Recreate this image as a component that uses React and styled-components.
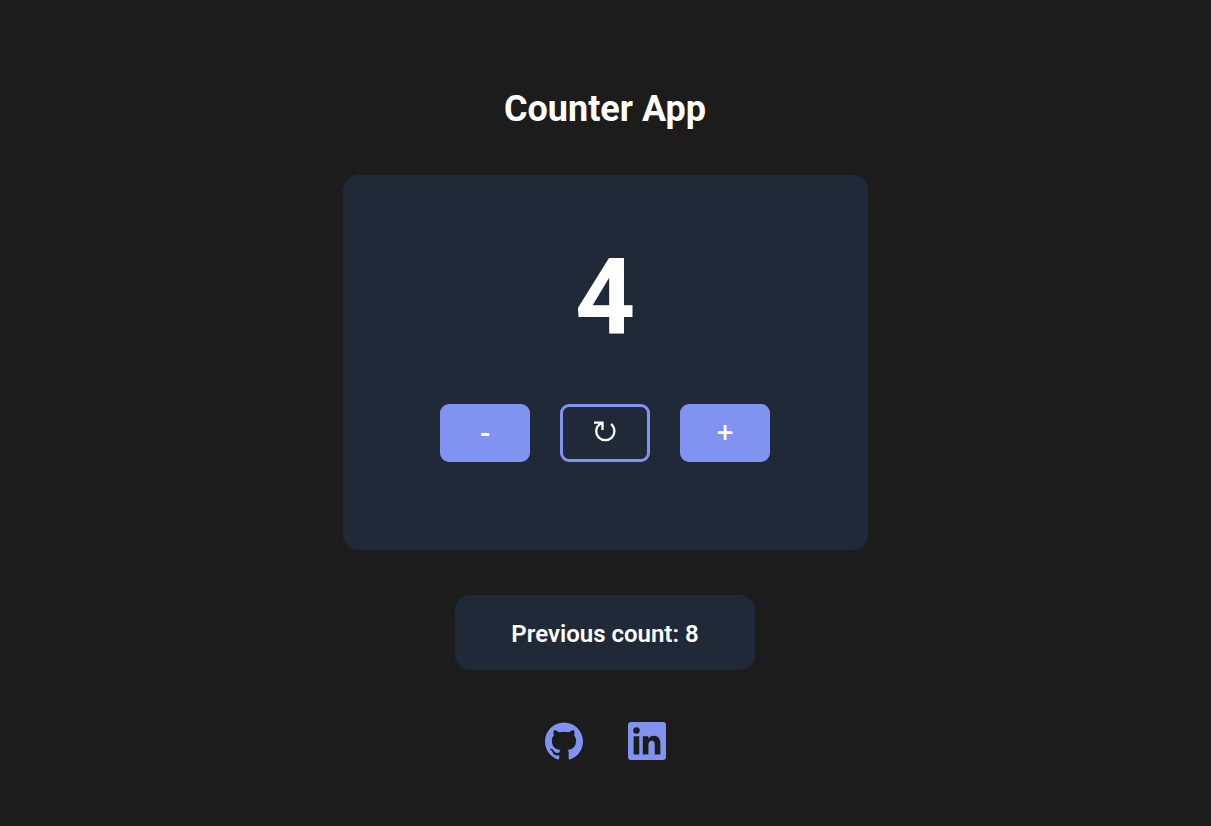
import React, { useState } from "react";
import styled, { createGlobalStyle } from "styled-components";

const GlobalStyle = createGlobalStyle`
  *, *::before, *::after { box-sizing: border-box; }
  body {
    margin: 0;
    background: #1c1c1c;
    color: #fff;
    font-family: Roboto, "Liberation Sans", sans-serif;
  }
`;

const Page = styled.main`
  min-height: 100vh;
  display: flex;
  flex-direction: column;
  align-items: center;
  padding: 88px 17px 64px 16px;
`;

const Title = styled.h1`
  margin: 0 0 45px;
  font-size: 36px;
  line-height: 42px;
  font-weight: 700;
`;

const Card = styled.section`
  width: 100%;
  max-width: 525px;
  padding: 61px 24px 88px;
  border-radius: 15px;
  background: #1f2937;
  display: flex;
  flex-direction: column;
  align-items: center;
`;

const Count = styled.output`
  margin-bottom: 45px;
  font-size: 105px;
  line-height: 123px;
  font-weight: 700;
`;

const Controls = styled.div`
  display: flex;
  gap: 30px;
`;

const ControlButton = styled.button`
  width: 90px;
  height: 58px;
  padding: 0 0 2px;
  display: flex;
  align-items: center;
  justify-content: center;
  border: 3px solid #8193f1;
  border-radius: 9px;
  background: ${({ $outlined }) => ($outlined ? "transparent" : "#8193f1")};
  color: #fff;
  font-family: "Open Sans", "Liberation Sans", sans-serif;
  font-size: 30px;
  line-height: 34px;
  font-weight: 600;
  cursor: pointer;
`;

const Previous = styled.section`
  width: 100%;
  max-width: 300px;
  margin-top: 45px;
  padding: 25px 16px 21px;
  border-radius: 15px;
  background: #1f2937;
  text-align: center;
  font-size: 24px;
  line-height: 29px;
  font-weight: 600;
`;

const Links = styled.nav`
  display: flex;
  gap: 45px;
  margin-top: 52px;
`;

const IconLink = styled.a`
  display: flex;
  color: #8193f1;
`;

const BrandIcon = styled.svg.attrs({ viewBox: "0 0 24 24", "aria-hidden": true })`
  width: 38px;
  height: 38px;
  fill: currentColor;
`;

const ResetIcon = styled.svg.attrs({ viewBox: "0 0 24 24", "aria-hidden": true })`
  width: 24px;
  height: 24px;
  fill: none;
  stroke: currentColor;
  stroke-width: 2.3;
`;

export default function App() {
  const [state, setState] = useState({ count: 4, previous: 8 });
  const update = (next) => setState(({ count }) => ({ count: next(count), previous: count }));

  return (
    <>
      <GlobalStyle />
      <Page>
        <Title>Counter App</Title>
        <Card>
          <Count>{state.count}</Count>
          <Controls>
            <ControlButton aria-label="Decrease" onClick={() => update((n) => n - 1)}>-</ControlButton>
            <ControlButton aria-label="Reset" $outlined onClick={() => update(() => 0)}>
              <ResetIcon>
                <path d="M1 2.7H9.5V10" />
                <path d="M9.5 3C6 4.2 3.2 7.4 3.2 11.5A9.1 8.6 0 0 0 21.4 11.5C21.4 8.2 20.2 5.8 18 4" />
              </ResetIcon>
            </ControlButton>
            <ControlButton aria-label="Increase" onClick={() => update((n) => n + 1)}>+</ControlButton>
          </Controls>
        </Card>
        <Previous>Previous count: {state.previous}</Previous>
        <Links>
          <IconLink href="https://github.com" aria-label="GitHub">
            <BrandIcon>
              <path d="M12 .297c-6.63 0-12 5.373-12 12 0 5.303 3.438 9.8 8.205 11.385.6.113.82-.258.82-.577 0-.285-.01-1.04-.015-2.04-3.338.724-4.042-1.61-4.042-1.61C4.422 18.07 3.633 17.7 3.633 17.7c-1.087-.744.084-.729.084-.729 1.205.084 1.838 1.236 1.838 1.236 1.07 1.835 2.809 1.305 3.495.998.108-.776.417-1.305.76-1.605-2.665-.3-5.466-1.332-5.466-5.93 0-1.31.465-2.38 1.235-3.22-.135-.303-.54-1.523.105-3.176 0 0 1.005-.322 3.3 1.23.96-.267 1.98-.399 3-.405 1.02.006 2.04.138 3 .405 2.28-1.552 3.285-1.23 3.285-1.23.645 1.653.24 2.873.12 3.176.765.84 1.23 1.91 1.23 3.22 0 4.61-2.805 5.625-5.475 5.92.42.36.81 1.096.81 2.22 0 1.606-.015 2.896-.015 3.286 0 .315.21.69.825.57C20.565 22.092 24 17.592 24 12.297c0-6.627-5.373-12-12-12" />
            </BrandIcon>
          </IconLink>
          <IconLink href="https://linkedin.com" aria-label="LinkedIn">
            <BrandIcon>
              <path d="M20.447 20.452h-3.554v-5.569c0-1.328-.027-3.037-1.852-3.037-1.853 0-2.136 1.445-2.136 2.939v5.667H9.351V9h3.414v1.561h.046c.477-.9 1.637-1.85 3.37-1.85 3.601 0 4.267 2.37 4.267 5.455v6.286zM5.337 7.433a2.062 2.062 0 0 1-2.063-2.065 2.064 2.064 0 1 1 2.063 2.065zm1.782 13.019H3.555V9h3.564v11.452zM22.225 0H1.771C.792 0 0 .774 0 1.729v20.542C0 23.227.792 24 1.771 24h20.451C23.2 24 24 23.227 24 22.271V1.729C24 .774 23.2 0 22.222 0h.003z" />
            </BrandIcon>
          </IconLink>
        </Links>
      </Page>
    </>
  );
}
